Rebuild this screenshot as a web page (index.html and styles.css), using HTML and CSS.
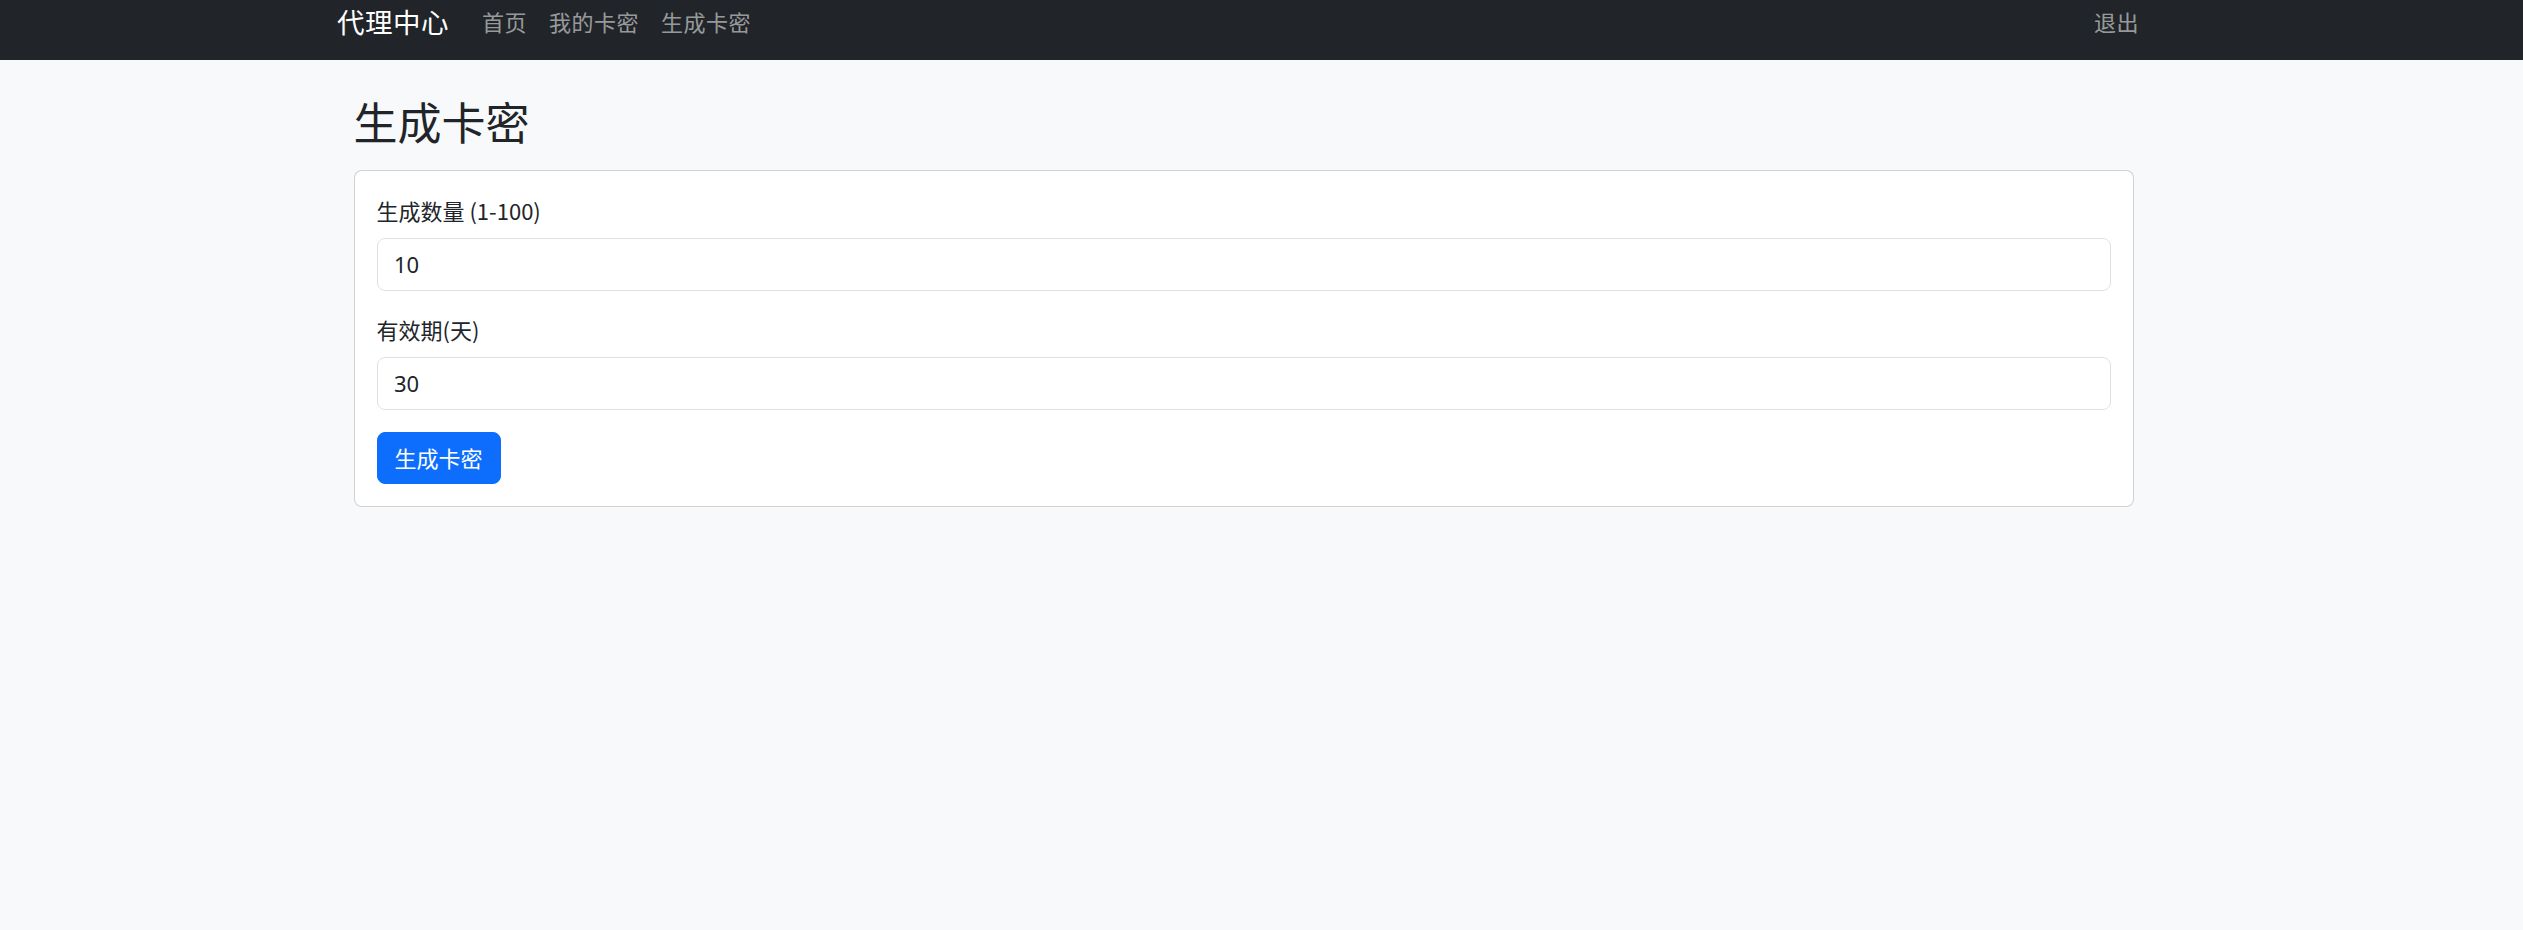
FILE: index.html
```html
<!DOCTYPE html>
<html lang="zh-CN">
<head>
    <meta charset="UTF-8">
    <meta name="viewport" content="width=device-width, initial-scale=1.0">
    <title>生成卡密 - 代理中心</title>
    <link rel="stylesheet" href="styles.css">
</head>
<body>
    <nav class="navbar">
        <div class="container nav-inner">
            <a class="brand" href="index.html">代理中心</a>
            <ul class="nav-links">
                <li><a href="index.html">首页</a></li>
                <li><a href="cards.html">我的卡密</a></li>
                <li><a href="generate.html">生成卡密</a></li>
            </ul>
            <a class="nav-logout" href="logout.html">退出</a>
        </div>
    </nav>

    <main class="container page">
        <h2>生成卡密</h2>
        <div class="card">
            <form class="card-body" id="genForm">
                <div class="field">
                    <label for="count">生成数量 (1-100)</label>
                    <input type="number" id="count" min="1" max="100" value="10">
                </div>
                <div class="field">
                    <label for="days">有效期(天)</label>
                    <input type="number" id="days" min="1" value="30">
                </div>
                <button type="submit" class="btn-primary">生成卡密</button>
            </form>
        </div>
    </main>
</body>
</html>
```

FILE: styles.css
```css
body {
    font-family: "Noto Sans CJK SC", sans-serif;
    font-size: 22px;
    line-height: 1.5;
    color: #212529;
    background-color: #f8f9fa;
    margin: 0;
}
.container {
    width: 1813px;
    margin-left: 337px;
    box-sizing: border-box;
}
.navbar {
    background-color: #212529;
    height: 60px;
}
.nav-inner {
    display: flex;
    align-items: center;
    height: 43px;
}
.brand {
    color: #fff;
    font-size: 27.5px;
    line-height: 41px;
    letter-spacing: 0.5px;
    text-decoration: none;
    margin-right: 22px;
}
.nav-links {
    display: flex;
    list-style: none;
    margin: 0;
    padding: 0;
    flex: 1;
}
.nav-links a,
.nav-logout {
    display: block;
    color: rgba(255, 255, 255, 0.55);
    text-decoration: none;
    padding: 0 11px;
    line-height: 33px;
    letter-spacing: 0.5px;
}
.nav-links a:hover,
.nav-logout:hover {
    color: rgba(255, 255, 255, 0.75);
}
.page {
    padding: 35px 16.5px 0;
}
.page h2 {
    font-size: 44px;
    font-weight: 400;
    line-height: 1.2;
    margin: 0 0 22px;
}
.card {
    background-color: #fff;
    border: 1px solid rgba(0, 0, 0, 0.175);
    border-radius: 8px;
}
.card-body {
    padding: 23px 22px 22px;
    margin: 0;
}
.field {
    margin-bottom: 22px;
}
.field label {
    display: block;
    margin-bottom: 11px;
}
.field input {
    display: block;
    width: 100%;
    box-sizing: border-box;
    height: 53px;
    padding: 8px 16.5px;
    font: inherit;
    font-family: "Noto Sans", "Noto Sans CJK SC", sans-serif;
    color: #212529;
    border: 1px solid #dee2e6;
    border-radius: 8px;
    -moz-appearance: textfield;
}
.field input::-webkit-outer-spin-button,
.field input::-webkit-inner-spin-button {
    -webkit-appearance: none;
    margin: 0;
}
.btn-primary {
    display: block;
    font: inherit;
    color: #fff;
    background-color: #0d6efd;
    border: 1px solid #0d6efd;
    border-radius: 8px;
    height: 52px;
    padding: 0 17px;
    cursor: pointer;
}
.btn-primary:hover {
    background-color: #0b5ed7;
}
```
